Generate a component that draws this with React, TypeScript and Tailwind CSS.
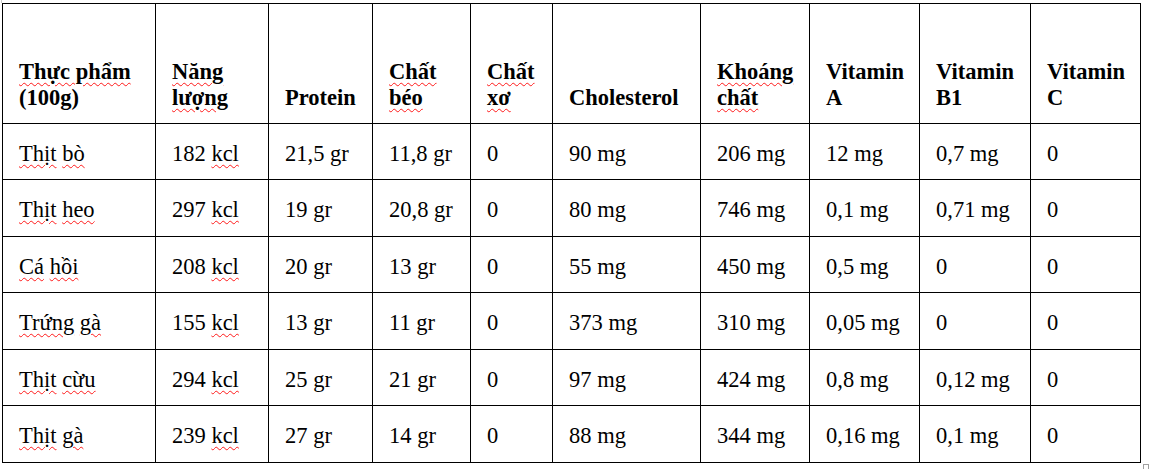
import React from "react";

// Word-style spell-check squiggle
function Sq({ children }: { children: React.ReactNode }) {
  return (
    <span className="underline decoration-wavy decoration-[#ff1a1a] decoration-1 underline-offset-[3px]">
      {children}
    </span>
  );
}

const rows = [
  ["Thịt bò", "182 kcl", "21,5 gr", "11,8 gr", "0", "90 mg", "206 mg", "12 mg", "0,7 mg", "0"],
  ["Thịt heo", "297 kcl", "19 gr", "20,8 gr", "0", "80 mg", "746 mg", "0,1 mg", "0,71 mg", "0"],
  ["Cá hồi", "208 kcl", "20 gr", "13 gr", "0", "55 mg", "450 mg", "0,5 mg", "0", "0"],
  ["Trứng gà", "155 kcl", "13 gr", "11 gr", "0", "373 mg", "310 mg", "0,05 mg", "0", "0"],
  ["Thịt cừu", "294 kcl", "25 gr", "21 gr", "0", "97 mg", "424 mg", "0,8 mg", "0,12 mg", "0"],
  ["Thịt gà", "239 kcl", "27 gr", "14 gr", "0", "88 mg", "344 mg", "0,16 mg", "0,1 mg", "0"],
];

const headers: React.ReactNode[] = [
  <>
    <Sq>Thực phẩm</Sq>
    <br />
    (100g)
  </>,
  <>
    <Sq>Năng</Sq>
    <br />
    <Sq>lượng</Sq>
  </>,
  <>Protein</>,
  <>
    <Sq>Chất</Sq>
    <br />
    <Sq>béo</Sq>
  </>,
  <>
    <Sq>Chất</Sq>
    <br />
    <Sq>xơ</Sq>
  </>,
  <>Cholesterol</>,
  <>
    <Sq>Khoáng</Sq>
    <br />
    <Sq>chất</Sq>
  </>,
  <>
    Vitamin
    <br />A
  </>,
  <>
    Vitamin
    <br />
    B1
  </>,
  <>
    Vitamin
    <br />C
  </>,
];

function renderCell(text: string, col: number) {
  if (col === 0) {
    const words = text.split(" ");
    return words.map((w, i) => (
      <React.Fragment key={i}>
        {i > 0 && " "}
        <Sq>{w}</Sq>
      </React.Fragment>
    ));
  }
  if (col === 1) {
    const [num] = text.split(" ");
    return (
      <>
        {num} <Sq>kcl</Sq>
      </>
    );
  }
  return text;
}

export default function App() {
  return (
    <div className="font-['Liberation_Serif'] relative h-[469px] w-[1149px] overflow-hidden bg-white pl-[2px] pt-[3px] text-black">
      {/* word table handles */}
      <div className="absolute left-[1px] top-0 h-[3px] w-[1px] bg-[#c8c8c8]" />
      <div className="absolute left-[1143px] top-[464px] h-[6px] w-[6px] border border-[#a0a0a0] bg-white" />

      <div className="font-['Liberation_Serif'] grid w-max grid-cols-[153px_113px_104px_98px_82px_148px_109px_110px_111px_110px] grid-rows-[120px_56px_57px_56px_57px_56px_57px] border-l border-t border-black text-[22.5px] leading-[26px]">
        {headers.map((h, i) => (
          <div
            key={`h${i}`}
            className="font-['Liberation_Serif'] flex flex-col justify-end border-b border-r border-black pb-[12px] pl-[16px] font-bold"
          >
            <div>{h}</div>
          </div>
        ))}
        {rows.map((r, ri) =>
          r.map((c, ci) => (
            <div
              key={`${ri}-${ci}`}
              className="font-['Liberation_Serif'] whitespace-nowrap border-b border-r border-black pl-[16px] pt-[17px]"
            >
              {renderCell(c, ci)}
            </div>
          ))
        )}
      </div>
    </div>
  );
}
